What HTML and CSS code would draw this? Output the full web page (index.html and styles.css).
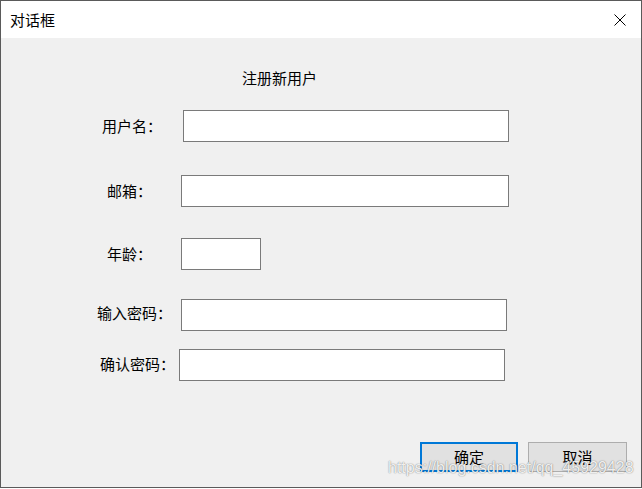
FILE: index.html
```html
<!DOCTYPE html>
<html lang="zh">
<head>
<meta charset="utf-8">
<title>对话框</title>
<link rel="stylesheet" href="styles.css">
</head>
<body>
<div class="window">
  <div class="titlebar">
    <span class="title">对话框</span>
    <svg class="close" width="12" height="12" viewBox="0 0 12 12"><path d="M0.5 0.5 L11.5 11.5 M11.5 0.5 L0.5 11.5" stroke="#000" stroke-width="1" fill="none"/></svg>
  </div>
  <div class="content">
    <div class="heading">注册新用户</div>
    <div class="row row-user"><label class="lbl">用户名：</label><input class="field field-user" type="text"></div>
    <div class="row row-mail"><label class="lbl">邮箱：</label><input class="field field-mail" type="text"></div>
    <div class="row row-age"><label class="lbl">年龄：</label><input class="field field-age" type="text"></div>
    <div class="row row-pass"><label class="lbl">输入密码：</label><input class="field field-pass" type="password"></div>
    <div class="row row-confirm"><label class="lbl">确认密码：</label><input class="field field-confirm" type="password"></div>
    <div class="buttons">
      <button class="btn btn-default">确定</button>
      <button class="btn btn-cancel">取消</button>
    </div>
    <div class="watermark">https://blog.csdn.net/qq_45929428</div>
  </div>
</div>
</body>
</html>
```
FILE: styles.css
```css
html, body {
  margin: 0;
  padding: 0;
  background: #ffffff;
}
body {
  width: 642px;
  height: 489px;
  overflow: hidden;
  font-family: "Noto Sans CJK SC", "Noto Sans", sans-serif;
  font-size: 15px;
  color: #000;
}
.window {
  width: 642px;
  height: 488px;
  box-sizing: border-box;
  border: 1px solid #5a5a5a;
  display: flex;
  flex-direction: column;
}
.titlebar {
  height: 37px;
  flex: none;
  background: #ffffff;
  display: flex;
  align-items: center;
  padding-left: 9px;
}
.title {
  line-height: 20px;
  font-size: 15px;
}
.close {
  margin-left: auto;
  margin-right: 15px;
  display: block;
}
.content {
  flex: 1;
  background: #f0f0f0;
  position: relative;
}
.heading {
  margin-top: 30px;
  padding-left: 241px;
  line-height: 20px;
}
.row {
  display: flex;
  align-items: center;
  height: 32px;
}
.lbl {
  display: block;
  line-height: 20px;
  flex: none;
}
.field {
  display: block;
  height: 32px;
  box-sizing: border-box;
  border: 1px solid #7a7a7a;
  background: #fff;
  padding: 0 3px;
  margin: 0;
  outline: none;
  font: inherit;
}
.row-user { margin-top: 22px; padding-left: 101px; }
.row-user .lbl { width: 81px; }
.field-user { width: 326px; }

.row-mail { margin-top: 33px; padding-left: 106px; }
.row-mail .lbl { width: 74px; }
.field-mail { width: 328px; }

.row-age { margin-top: 31px; padding-left: 106px; }
.row-age .lbl { width: 74px; }
.field-age { width: 80px; }

.row-pass { margin-top: 29px; padding-left: 96px; }
.row-pass .lbl { width: 84px; padding-bottom: 4px; }
.field-pass { width: 326px; }

.row-confirm { margin-top: 18px; padding-left: 99px; }
.row-confirm .lbl { width: 79px; padding-bottom: 3px; }
.field-confirm { width: 326px; }

.buttons {
  margin-top: 61px;
  padding-left: 419px;
  display: flex;
  gap: 10px;
}
.btn {
  height: 30px;
  box-sizing: border-box;
  background: #e1e1e1;
  border: 1px solid #adadad;
  font: inherit;
  font-size: 15px;
  line-height: 20px;
  padding: 0;
  margin: 0;
  color: #000;
}
.btn-default {
  width: 98px;
  border: 2px solid #0078d7;
}
.btn-cancel {
  width: 99px;
}
.watermark {
  position: absolute;
  left: 387px;
  top: 420px;
  font-family: "Liberation Sans", Arial, sans-serif;
  font-size: 16px;
  line-height: 20px;
  color: rgba(255, 255, 255, 0.9);
  text-shadow: 0 0 1px rgba(0, 0, 0, 0.45), 0 0 2px rgba(0, 0, 0, 0.2);
  white-space: nowrap;
  pointer-events: none;
}
```
